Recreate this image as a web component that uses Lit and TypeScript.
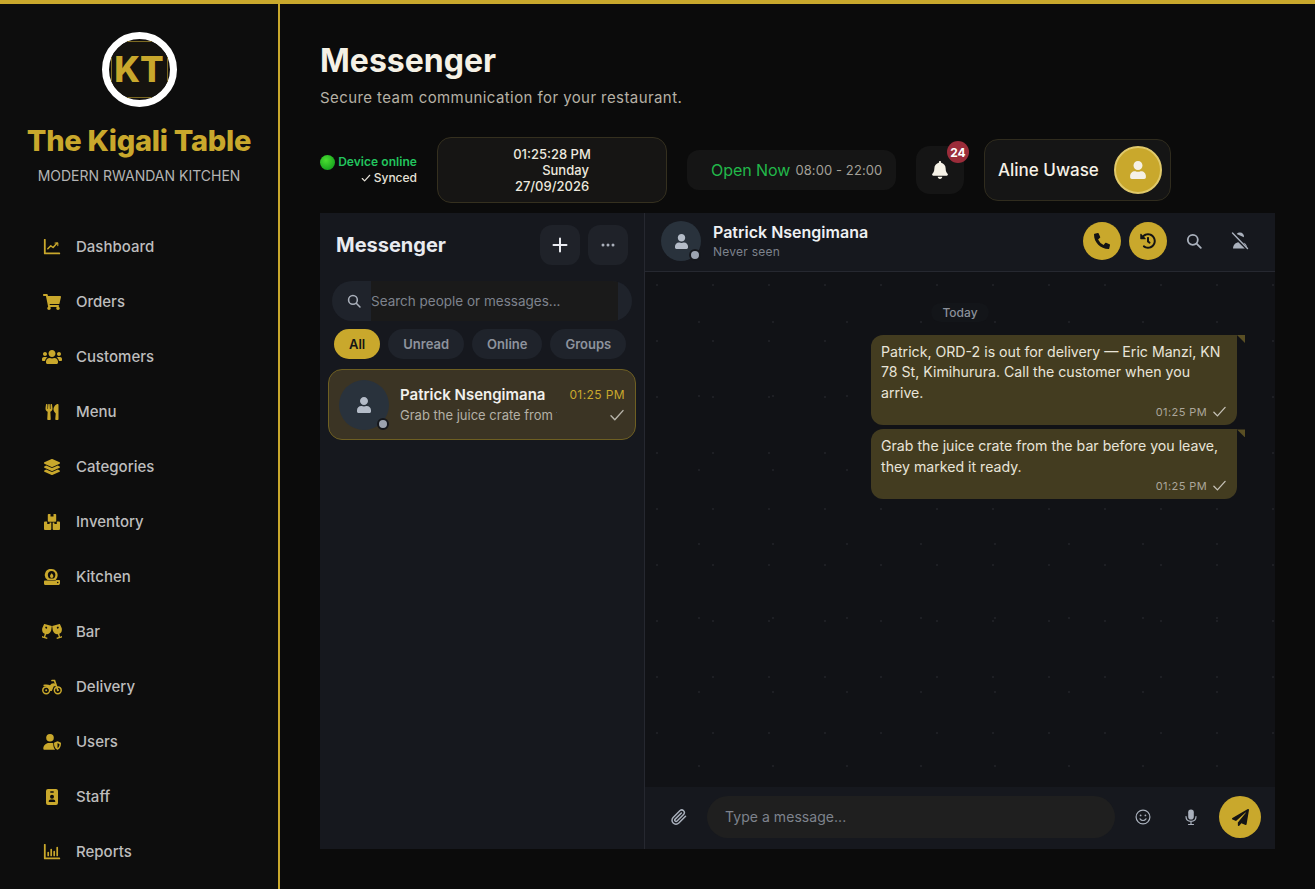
import { LitElement, html, css, svg } from "lit";
import { customElement } from "lit/decorators.js";

const ic = (vb: string, body: unknown, cls = "") =>
  html`<svg class="ic ${cls}" viewBox="${vb}" fill="currentColor" aria-hidden="true">${body}</svg>`;

const P = {
  user: "M224 256c70.7 0 128-57.3 128-128S294.7 0 224 0 96 57.3 96 128s57.3 128 128 128zm89.6 32h-16.7c-22.2 10.2-46.9 16-72.9 16s-50.6-5.8-72.9-16h-16.7C60.2 288 0 348.2 0 422.4V464c0 26.5 21.5 48 48 48h352c26.5 0 48-21.5 48-48v-41.6c0-74.2-60.2-134.4-134.4-134.4z",
  users: "M96 224c35.3 0 64-28.7 64-64s-28.7-64-64-64-64 28.7-64 64 28.7 64 64 64zm448 0c35.3 0 64-28.7 64-64s-28.7-64-64-64-64 28.7-64 64 28.7 64 64 64zm32 32h-64c-17.6 0-33.5 7.1-45.1 18.6 40.3 22.1 68.9 62 75.1 109.4h66c17.7 0 32-14.3 32-32v-32c0-35.3-28.7-64-64-64zm-256 0c61.9 0 112-50.1 112-112S381.9 32 320 32 208 82.1 208 144s50.1 112 112 112zm76.8 32h-8.3c-20.8 10-43.9 16-68.5 16s-47.6-6-68.5-16h-8.3C179.6 288 128 339.6 128 403.2V432c0 26.5 21.5 48 48 48h288c26.5 0 48-21.5 48-48v-28.8c0-63.6-51.6-115.2-115.2-115.2zm-223.7-13.4C161.5 263.1 145.6 256 128 256H64c-35.3 0-64 28.7-64 64v32c0 17.7 14.3 32 32 32h65.9c6.3-47.4 34.9-87.3 75.2-109.4z",
  bell: "M224 512c35.32 0 63.97-28.65 63.97-64H160.03c0 35.35 28.65 64 63.97 64zm215.39-149.71c-19.32-20.76-55.47-51.99-55.47-154.29 0-77.7-54.48-139.9-127.94-155.16V32c0-17.67-14.32-32-31.98-32s-31.98 14.33-31.98 32v20.84C118.56 68.1 64.08 130.3 64.08 208c0 102.3-36.15 133.53-55.47 154.29-6 6.45-8.66 14.16-8.61 21.71.11 16.4 12.98 32 32.1 32h383.8c19.12 0 32-15.6 32.1-32 .05-7.55-2.61-15.27-8.61-21.71z",
  phone: "M497.39 361.8l-112-48a24 24 0 0 0-28 6.9l-49.6 60.6A370.66 370.66 0 0 1 130.6 204.11l60.6-49.6a23.94 23.94 0 0 0 6.9-28l-48-112A24.16 24.16 0 0 0 122.6.61l-104 24A24 24 0 0 0 0 48c0 256.5 207.9 464 464 464a24 24 0 0 0 23.4-18.6l24-104a24.29 24.29 0 0 0-14.01-27.6z",
  plane: "M476 3.2L12.5 270.6c-18.1 10.4-15.8 35.6 2.2 43.2L121 358.4l287.3-253.2c5.5-4.9 13.3 2.6 8.6 8.3L176 407v80.5c0 23.6 28.5 32.9 42.5 15.8L282 426l124.6 52.2c14.2 6 30.4-2.9 33-18.2l72-432C515 7.8 493.3-6.8 476 3.2z",
  history: "M504 255.531c.253 136.64-111.18 248.372-247.82 248.468-59.015.042-113.223-20.53-155.822-54.911-11.077-8.94-11.905-25.541-1.839-35.607l11.267-11.267c8.609-8.609 22.353-9.551 31.891-1.984C173.062 425.135 212.781 440 256 440c101.705 0 184-82.311 184-184 0-101.705-82.311-184-184-184-48.814 0-93.149 18.969-126.068 49.932l50.754 50.754c10.08 10.08 2.941 27.314-11.313 27.314H24c-8.837 0-16-7.163-16-16V38.627c0-14.254 17.234-21.393 27.314-11.314l49.372 49.372C129.209 34.136 189.552 8 256 8c136.81 0 247.747 110.78 248 247.531zm-180.912 78.784l9.823-12.63c8.138-10.463 6.253-25.542-4.21-33.679L288 256.349V152c0-13.255-10.745-24-24-24h-16c-13.255 0-24 10.745-24 24v135.651l65.409 50.874c10.463 8.137 25.541 6.253 33.679-4.21z",
  utensils: "M207.9 15.2c.8 4.7 16.1 94.5 16.1 128.8 0 52.3-27.8 89.6-68.9 104.6L168 486.7c.7 13.7-10.2 25.3-24 25.3H80c-13.7 0-24.7-11.5-24-25.3l12.9-238.1C27.7 233.6 0 196.2 0 144 0 109.6 15.3 19.9 16.1 15.2 19.3-5.1 61.4-5.4 64 16.3v141.2c1.3 3.4 15.1 3.2 16 0 1.4-25.3 7.9-139.2 8-141.8 3.3-20.8 44.7-20.8 47.9 0 .2 2.7 6.6 116.5 8 141.8.9 3.2 14.8 3.4 16 0V16.3c2.6-21.6 44.8-21.4 48-1.1zm119.2 285.7l-15 185.1c-1.2 14 9.9 26 23.9 26h56c13.3 0 24-10.7 24-24V24c0-13.2-10.7-24-24-24-82.5 0-221.4 178.5-64.9 300.9z",
  layers: "M12.41 148.02l232.94 105.67c6.8 3.09 14.49 3.09 21.29 0l232.94-105.67c16.55-7.51 16.55-32.52 0-40.03L266.65 2.31a25.607 25.607 0 0 0-21.29 0L12.41 107.98c-16.55 7.51-16.55 32.53 0 40.04zm487.18 88.28l-58.09-26.33-161.64 73.27c-7.56 3.43-15.59 5.17-23.86 5.17s-16.29-1.74-23.86-5.17L70.51 209.97l-58.1 26.33c-16.55 7.5-16.55 32.5 0 40l232.94 105.59c6.8 3.08 14.49 3.08 21.29 0L499.59 276.3c16.55-7.5 16.55-32.5 0-40zm0 127.8l-57.87-26.23-161.86 73.37c-7.56 3.43-15.59 5.17-23.86 5.17s-16.29-1.74-23.86-5.17L70.29 337.87 12.41 364.1c-16.55 7.5-16.55 32.5 0 40l232.94 105.59c6.8 3.08 14.49 3.08 21.29 0L499.59 404.1c16.55-7.5 16.55-32.5 0-40z",
  cart: "M528.12 301.319l47.273-208C578.806 78.301 567.391 67 551.99 64H159.208l-9.166-44.81C147.758 8.021 137.93 0 126.529 0H24C10.745 0 0 10.745 0 24v16c0 13.255 10.745 24 24 24h69.883l70.248 343.435C147.325 417.1 136 435.222 136 456c0 30.928 25.072 56 56 56s56-25.072 56-56c0-15.674-6.447-29.835-16.824-40h209.647C430.447 426.165 424 440.326 424 456c0 30.928 25.072 56 56 56s56-25.072 56-56c0-22.172-12.888-41.332-31.579-50.405l5.517-24.276c3.413-15.018-8.002-29.319-23.403-29.319H218.117l-6.545-32h293.145c11.206 0 20.92-7.754 23.403-18.681z",
};

const p = (d: string) => svg`<path d="${d}"/>`;
const sol = (vb: string, d: string, cls = "") => ic(vb, p(d), cls);

const glass = "M-4 0h8l.6 4.500c0 2.800-1.900 4.700-3.900 4.900v2.900h2.300v1.400h-6V12.300h2.300V9.400C-2.700 9.200-4.600 7.300-4.600 4.500z";

const navIcons = {
  chart: html`<svg class="ic nav-ic" viewBox="0 0 20 16" fill="none" stroke="currentColor" stroke-width="1.800" stroke-linecap="round" stroke-linejoin="round"><path d="M2.800 .8v13.600h14.500"/><path d="M5.800 9.800l3-3 2.300 1.700 4-4.400" stroke-width="1.500"/><path d="M13 4h2.800v2.600" stroke-width="1.100"/></svg>`,
  cart: sol("0 0 576 512", P.cart, "nav-ic"),
  users: sol("0 0 640 512", P.users, "nav-ic"),
  menu: sol("0 0 416 512", P.utensils, "nav-ic"),
  layers: sol("0 0 512 512", P.layers, "nav-ic"),
  boxes: html`<svg class="ic nav-ic" viewBox="2 2 16 16" fill="currentColor"><path d="M6.600 2h1.900v2.400h3V2h1.900a.8.8 0 0 1 .8.8V9a.8.8 0 0 1-.8.8H6.600a.8.8 0 0 1-.8-.8V2.800a.8.8 0 0 1 .8-.8z"/><path d="M3 9.400h2.200v2.700h2.400V10.600h1.700V17a1 1 0 0 1-1 1H3a1 1 0 0 1-1-1v-6.600a1 1 0 0 1 1-1z"/><path d="M10.700 10.600h1.700v1.500h2.400V9.400H17a1 1 0 0 1 1 1V17a1 1 0 0 1-1 1h-5.300a1 1 0 0 1-1-1z"/></svg>`,
  kitchen: html`<svg class="ic nav-ic" viewBox="2 2 16 16" fill="currentColor"><path fill-rule="evenodd" d="M9.600 2a6 6 0 0 1 5.900 7.200c-.3 1.600-1 2.800-1.900 3.800H5.600a6 6 0 0 1 4-11zm0 2a3.800 3.800 0 0 0-3.700 4.400c.2 1.500.9 2.500 1.800 3.100h3.800c.9-.6 1.600-1.600 1.800-3.100A3.800 3.800 0 0 0 9.600 4z"/><path d="M9.700 6.300c.9 1 1.700 1.900 1.700 3a1.700 1.700 0 0 1-3.400 0c0-1.100.8-2 1.700-3z"/><path fill-rule="evenodd" d="M3 13.600h9.500c1.200 0 1.700-.7 2.500-.7h2.200c.5 0 .8.400.8.800v2.500c0 1-.8 1.800-1.800 1.800H3.200c-1 0-1.200-.8-1.200-1.700v-1.700c0-.5.500-1 1-1zm12.700 1.100a.8.800 0 1 0 0 1.600.8.800 0 0 0 0-1.600z"/></svg>`,
  bar: html`<svg class="ic nav-ic" viewBox="0 0 20 16" fill="currentColor"><g transform="translate(6 1) rotate(16)"><path d="${glass}"/><circle cx="-1" cy="3" r="1" fill="#0d0d0d"/></g><g transform="translate(14 1) rotate(-16)"><path d="${glass}"/><circle cx="1" cy="3" r="1" fill="#0d0d0d"/></g></svg>`,
  bike: html`<svg class="ic nav-ic" viewBox="0 0 20 16" fill="none" stroke="currentColor"><circle cx="4.200" cy="11.300" r="3.400" stroke-width="1.500"/><circle cx="15.800" cy="11.300" r="3.400" stroke-width="1.500"/><circle cx="4.200" cy="11.300" r="1" fill="currentColor" stroke="none"/><circle cx="15.800" cy="11.300" r="1" fill="currentColor" stroke="none"/><path d="M15.800 11.300L12.500 1.500H10" stroke-width="1.700" stroke-linecap="round"/><path fill="currentColor" stroke="none" d="M1.500 5.800c2.500-.5 4.800-.4 6.500.4l1.400-1.400c1-.8 2.900-.8 3.900-.1l.8 2-2.400 .8-1.900 4.400H7.500C7 9 5 7.200 1.500 7.300z"/></svg>`,
  shield: html`<svg class="ic nav-ic" viewBox="0 0 20 16" fill="currentColor"><circle cx="8" cy="3.800" r="3.800"/><path d="M7 9h2.200c.8 0 1.500.1 2.100.3v1.200c0 1.800.6 3.600 1.800 5.200H2.200a1 1 0 0 1-.9-1C1.300 11.500 3.800 9 7 9z"/><path fill-rule="evenodd" d="M15.500 7.300l3 1.300c.3.100.5.400.5.700 0 2.600-.8 5.400-3.300 6.500a1 1 0 0 1-.4 0c-2.500-1.100-3.300-3.900-3.300-6.500 0-.3.200-.6.500-.7zm0 1.800v5c1.300-.8 1.900-2.400 2-3.900z"/></svg>`,
  badge: html`<svg class="ic nav-ic" viewBox="0 0 20 16" fill="currentColor"><path fill-rule="evenodd" d="M6 0h8a2 2 0 0 1 2 2v12a2 2 0 0 1-2 2H6a2 2 0 0 1-2-2V2a2 2 0 0 1 2-2zm2.800 2.300a.7.700 0 0 0 0 1.400h2.400a.7.700 0 0 0 0-1.400zM10 5.700a2 2 0 1 0 0 4 2 2 0 0 0 0-4zm-1.300 4.800c-1.100 0-2 .8-2 1.900 0 .3.300.6.600.6h5.400c.3 0 .6-.3.600-.6 0-1.100-.9-1.900-2-1.900z"/></svg>`,
  reports: html`<svg class="ic nav-ic" viewBox="0 0 20 16" fill="none" stroke="currentColor" stroke-linecap="round"><path d="M2.800 .8v13.600h14.500" stroke-width="1.800" stroke-linejoin="round"/><path d="M6.200 8.500v3M9.200 5.500v6M12.200 7.500v4M15.200 3.500v8" stroke-width="1.700"/></svg>`,
};

const check = (cls = "") => html`<svg class="ic ${cls}" viewBox="0 0 16 16" fill="none" stroke="currentColor" stroke-width="1.400" stroke-linecap="round" stroke-linejoin="round"><path d="M2 8.800l3.800 3.900L14 3.600"/></svg>`;
const searchIc = html`<svg class="ic" viewBox="0 0 16 16" fill="none" stroke="currentColor" stroke-width="1.800" stroke-linecap="round"><circle cx="6.800" cy="6.800" r="5"/><path d="M10.600 10.600l4.200 4.200"/></svg>`;

const nav: [string, unknown][] = [
  ["Dashboard", navIcons.chart], ["Orders", navIcons.cart], ["Customers", navIcons.users],
  ["Menu", navIcons.menu], ["Categories", navIcons.layers], ["Inventory", navIcons.boxes],
  ["Kitchen", navIcons.kitchen], ["Bar", navIcons.bar], ["Delivery", navIcons.bike],
  ["Users", navIcons.shield], ["Staff", navIcons.badge], ["Reports", navIcons.reports],
];

@customElement("app-root")
export class AppRoot extends LitElement {
  static styles = css`
    :host { display: block; height: 889px; overflow: hidden; background: #0b0b0b; color: #f5f1e6; font-family: Inter, "Noto Sans", sans-serif; }
    * { box-sizing: border-box; }
    .ic { display: block; flex: none; }
    .app { display: flex; flex-direction: column; height: 889px; }
    .topline { height: 4px; background: #c9a82c; flex: none; }
    .body { display: flex; flex: 1; min-height: 0; }
    .side { width: 280px; flex: none; background: #0d0d0d; border-right: 2px solid #c9a82c; display: flex; flex-direction: column; align-items: center; padding-top: 28px; overflow: hidden; }
    .logo { width: 75px; height: 75px; border-radius: 50%; border: 7px solid #fff; background: #141210; overflow: hidden; display: flex; align-items: center; justify-content: center; flex: none; }
    .logo-box { width: 57px; height: 57px; flex: none; background: #15130f; border: 1.5px solid #7d6a22; display: flex; align-items: center; justify-content: center; color: #c9a82c; font-size: 35px; font-weight: 800; line-height: 1; }
    .brand { margin: 15px 0 0; font-size: 29px; line-height: 38px; font-weight: 800; color: #c9a82c; letter-spacing: -0.27px; white-space: nowrap; }
    .tag { margin-top: 6px; font-size: 14px; line-height: 20px; color: #b4b4b4; white-space: nowrap; }
    .nav { align-self: stretch; margin-top: 33px; display: flex; flex-direction: column; }
    .nav-item { height: 55px; flex: none; display: flex; align-items: center; gap: 14px; padding-left: 42px; font-size: 15px; font-weight: 500; color: #bdbdbd; }
    .nav-ic { width: 20px; height: 16px; color: #c9a82c; }
    .main { flex: 1; min-width: 0; padding: 37px 40px 40px; display: flex; flex-direction: column; }
    h1 { margin: 0; font-size: 32px; line-height: 40px; font-weight: 700; color: #f5f1e6; }
    .sub { margin-top: 7px; font-size: 15px; line-height: 20px; color: #b6b1a5; letter-spacing: 0.42px; }
    .bar { margin-top: 29px; height: 66px; flex: none; display: flex; align-items: center; gap: 20px; }
    .status { width: 97px; flex: none; display: flex; flex-direction: column; align-items: flex-end; font-size: 12px; line-height: 16px; font-weight: 600; }
    .online { display: flex; align-items: center; color: #22c55e; gap: 3px; white-space: nowrap; letter-spacing: 0.05px; }
    .led { width: 15px; height: 15px; border-radius: 50%; background: radial-gradient(circle at 40% 35%, #4ade30, #15a01e 80%); flex: none; }
    .synced { display: flex; align-items: center; gap: 3px; color: #e6e2d8; font-weight: 500; }
    .synced .ic { width: 10px; height: 10px; stroke-width: 1.800; }
    .clock { width: 230px; height: 66px; flex: none; border-radius: 14px; border: 1px solid #35301f; background: #161514; display: flex; flex-direction: column; align-items: center; justify-content: center; font-size: 13px; line-height: 16px; font-weight: 500; color: #ece8de; }
    .clock .day { padding-left: 27px; }
    .open { width: 209px; height: 40px; flex: none; border-radius: 12px; background: #151515; display: flex; align-items: center; padding-left: 24px; gap: 5px; white-space: nowrap; }
    .open b { font-size: 16px; font-weight: 400; color: #22b84a; letter-spacing: -0.05px; }
    .open span { font-size: 13px; color: #a3a098; letter-spacing: 0.1px; }
    .bell { width: 48px; height: 48px; border-radius: 14px; background: #151515; position: relative; display: flex; align-items: center; justify-content: center; color: #f5f1e6; flex: none; }
    .bell .ic { width: 16px; height: 18px; }
    .count { position: absolute; top: -5px; right: -5px; width: 22px; height: 22px; border-radius: 50%; background: #9b2c3a; color: #fff; font-size: 12px; font-weight: 700; display: flex; align-items: center; justify-content: center; }
    .me { width: 187px; height: 62px; flex: none; border-radius: 14px; border: 1px solid #302c1e; background: #151515; display: flex; align-items: center; justify-content: space-between; padding: 0 8px 0 13px; font-size: 17px; font-weight: 500; color: #f5f1e6; }
    .me-av { width: 48px; height: 48px; border-radius: 50%; background: #c9a82c; border: 2px solid #e0c96a; display: flex; align-items: center; justify-content: center; color: #f5f1e6; }
    .me-av .ic { width: 16px; height: 18px; }
    .panel { margin-top: 10px; flex: 1; min-height: 0; display: flex; background: #16181e; }
    .list { width: 325px; flex: none; border-right: 1px solid #262830; display: flex; flex-direction: column; }
    .list-head { height: 64px; flex: none; padding: 0 16px; display: flex; align-items: center; gap: 8px; margin-bottom: 4px; }
    .list-head h2 { margin: 0 auto 0 0; font-size: 20px; font-weight: 700; color: #e9ebf0; }
    .sq { width: 40px; height: 40px; border-radius: 12px; background: #1f2229; display: flex; align-items: center; justify-content: center; color: #e9ebf0; flex: none; }
    .search { margin: 0 12px; height: 40px; border-radius: 20px; background: #1f232b; display: flex; align-items: stretch; overflow: hidden; padding: 0 14px 0 15px; flex: none; }
    .search .ic { width: 14px; height: 14px; align-self: center; color: #a9afba; margin-right: 10px; }
    .search div { flex: 1; background: #1a1a1a; color: #7e838d; font-size: 13.500px; line-height: 40px; }
    .chips { display: flex; gap: 8px; padding: 8px 14px 0; flex: none; }
    .chip { height: 30px; border-radius: 15px; padding: 0 15px; background: #1f232b; color: #8e939d; font-size: 13px; font-weight: 600; display: flex; align-items: center; }
    .chip.on { background: #c9a82c; color: #141414; }
    .conv { margin: 10px 8px 0; height: 71px; border-radius: 14px; border: 1px solid #6e5f22; background: #3b3424; display: flex; align-items: center; padding: 0 10px; flex: none; }
    .av { border-radius: 50%; background: #29323c; display: flex; align-items: center; justify-content: center; color: #b4bcc8; position: relative; flex: none; }
    .av.big { width: 50px; height: 50px; }
    .av.big .ic { width: 14px; height: 16px; }
    .av.small { width: 40px; height: 40px; }
    .av.small .ic { width: 13px; height: 15px; }
    .dot { position: absolute; right: 0; bottom: 0; width: 12px; height: 12px; border-radius: 50%; background: #9ca3af; border: 2px solid #15171c; }
    .conv-mid { margin-left: 11px; width: 157px; overflow: hidden; white-space: nowrap; }
    .conv-name { font-size: 15px; line-height: 20px; font-weight: 600; color: #f1f0ec; padding-top: 1px; }
    .conv-msg { font-size: 13px; line-height: 20px; color: #b4b1a6; }
    .conv-end { margin-left: auto; display: flex; flex-direction: column; align-items: flex-end; gap: 4px; }
    .conv-time { font-size: 12px; line-height: 16px; color: #c9a82c; letter-spacing: 0.4px; }
    .conv-end .ic { width: 16px; height: 16px; color: #b9b6ab; }
    .chat { flex: 1; min-width: 0; display: flex; flex-direction: column; }
    .chat-head { height: 59px; flex: none; border-bottom: 1px solid #262830; display: flex; align-items: center; padding: 0 16px 2px; }
    .chat-id { margin-left: 12px; }
    .chat-name { font-size: 16px; line-height: 20px; font-weight: 600; color: #eef0f3; }
    .chat-seen { font-size: 12px; line-height: 16px; color: #7d828c; letter-spacing: 0.25px; margin-top: 2px; }
    .act { margin-left: auto; display: flex; align-items: center; gap: 8px; }
    .gold { width: 38px; height: 38px; border-radius: 50%; background: #c9a82c; color: #141414; display: flex; align-items: center; justify-content: center; }
    .gold .ic { width: 16px; height: 16px; }
    .plain { width: 38px; height: 38px; display: flex; align-items: center; justify-content: center; color: #aab1bd; }
    .plain .ic { width: 16px; height: 16px; }
    .plain .wide { width: 18px; height: 18px; }
    .feed { flex: 1; min-height: 0; background-color: #111216; background-image: radial-gradient(circle, #1e1f24 1px, transparent 1.600px), radial-gradient(circle, #1e1f24 1px, transparent 1.600px); background-size: 56px 56px, 74px 74px; background-position: -16px -15px, 17px 13px; padding-top: 31px; display: flex; flex-direction: column; align-items: flex-end; }
    .today { align-self: center; height: 19px; margin-bottom: 13px; padding: 0 11px; border-radius: 10px; background: #131519; color: #8b909a; font-size: 12px; font-weight: 500; display: flex; align-items: center; }
    .msg { width: 366px; margin-right: 38px; background: #433c20; border-radius: 12px 0 12px 12px; padding: 7px 10px 5.500px; position: relative; font-size: 14.150px; line-height: 20.300px; color: #e8e4d8; margin-bottom: 4px; }
    .msg::after { content: ""; position: absolute; top: 0; right: -8px; width: 8px; height: 8px; background: #5a4f24; clip-path: polygon(0 0, 100% 0, 100% 100%); }
    .meta { display: flex; justify-content: flex-end; align-items: center; gap: 5px; font-size: 11px; line-height: 16px; color: #aba69a; letter-spacing: 0.4px; margin-top: 1px; }
    .meta .ic { width: 15px; height: 15px; color: #c5c1b6; }
    .foot { height: 62px; flex: none; display: flex; align-items: center; padding: 0 14px 2px 22px; background: #16181e; }
    .foot .plain { width: 24px; }
    .foot .clip { margin-right: 16px; }
    .input { width: 408px; height: 42px; border-radius: 21px; background: #1f1f1f; color: #7e838d; font-size: 14px; display: flex; align-items: center; padding: 0 0 1px 18px; margin-right: 16px; letter-spacing: 0.05px; }
    .foot .mic { margin-left: 24px; margin-right: 16px; }
    .send { width: 42px; height: 42px; border-radius: 50%; background: #c9a82c; color: #141414; display: flex; align-items: center; justify-content: center; }
    .send .ic { width: 17px; height: 17px; }
  `;

  render() {
    return html`
      <div class="app">
        <div class="topline"></div>
        <div class="body">
          <aside class="side">
            <div class="logo"><div class="logo-box">KT</div></div>
            <div class="brand">The Kigali Table</div>
            <div class="tag">MODERN RWANDAN KITCHEN</div>
            <nav class="nav">
              ${nav.map(([t, i]) => html`<div class="nav-item">${i}<span>${t}</span></div>`)}
            </nav>
          </aside>
          <main class="main">
            <h1>Messenger</h1>
            <div class="sub">Secure team communication for your restaurant.</div>
            <div class="bar">
              <div class="status">
                <div class="online"><span class="led"></span>Device online</div>
                <div class="synced">${check()}Synced</div>
              </div>
              <div class="clock"><div>01:25:28 PM</div><div class="day">Sunday</div><div>27/09/2026</div></div>
              <div class="open"><b>Open Now</b><span>08:00 - 22:00</span></div>
              <div class="bell">${sol("0 0 448 512", P.bell)}<div class="count">24</div></div>
              <div class="me"><span>Aline Uwase</span><div class="me-av">${sol("0 0 448 512", P.user)}</div></div>
            </div>
            <section class="panel">
              <div class="list">
                <div class="list-head">
                  <h2>Messenger</h2>
                  <div class="sq"><svg class="ic" width="16" height="16" viewBox="0 0 16 16" fill="none" stroke="currentColor" stroke-width="2" stroke-linecap="round"><path d="M8 1.500v13M1.500 8h13"/></svg></div>
                  <div class="sq"><svg class="ic" width="14" height="4" viewBox="0 0 14 4" fill="#a9afba"><circle cx="2" cy="2" r="1.500"/><circle cx="7" cy="2" r="1.500"/><circle cx="12" cy="2" r="1.500"/></svg></div>
                </div>
                <div class="search">${searchIc}<div>Search people or messages...</div></div>
                <div class="chips">
                  <div class="chip on">All</div><div class="chip">Unread</div><div class="chip">Online</div><div class="chip">Groups</div>
                </div>
                <div class="conv">
                  <div class="av big">${sol("0 0 448 512", P.user)}<span class="dot"></span></div>
                  <div class="conv-mid">
                    <div class="conv-name">Patrick Nsengimana</div>
                    <div class="conv-msg">Grab the juice crate from the bar before you leave</div>
                  </div>
                  <div class="conv-end"><div class="conv-time">01:25 PM</div>${check()}</div>
                </div>
              </div>
              <div class="chat">
                <div class="chat-head">
                  <div class="av small">${sol("0 0 448 512", P.user)}<span class="dot"></span></div>
                  <div class="chat-id"><div class="chat-name">Patrick Nsengimana</div><div class="chat-seen">Never seen</div></div>
                  <div class="act">
                    <div class="gold">${sol("0 0 512 512", P.phone)}</div>
                    <div class="gold">${sol("0 0 512 512", P.history)}</div>
                    <div class="plain">${searchIc}</div>
                    <div class="plain"><svg class="ic wide" viewBox="0 0 18 18"><path fill="currentColor" d="M9 .5a4 4 0 0 1 3.900 4.800L5.700 1.900A4 4 0 0 1 9 .5z"/><path fill="currentColor" d="M2 16.500c0-3.200 2.300-5.800 5.400-6.200l6.400 6.200z"/><path fill="currentColor" d="M12.500 10.500c2 .8 3.500 3 3.500 5z"/><path stroke="currentColor" stroke-width="1.400" stroke-linecap="round" d="M1.500 1l15 15.500"/></svg></div>
                  </div>
                </div>
                <div class="feed">
                  <div class="today">Today</div>
                  <div class="msg">Patrick, ORD-2 is out for delivery — Eric Manzi, KN 78 St, Kimihurura. Call the customer when you arrive.<div class="meta">01:25 PM${check()}</div></div>
                  <div class="msg">Grab the juice crate from the bar before you leave, they marked it ready.<div class="meta">01:25 PM${check()}</div></div>
                </div>
                <div class="foot">
                  <div class="plain clip"><svg class="ic" viewBox="2 1.500 15 15" fill="none" stroke="currentColor" stroke-width="1.400" stroke-linecap="round" stroke-linejoin="round"><path d="M15.600 8.300l-6.300 6.300a3.700 3.700 0 0 1-5.300-5.200l6.500-6.500a2.500 2.500 0 0 1 3.500 3.500l-6.300 6.400a1.200 1.200 0 0 1-1.800-1.800l5.800-5.700"/></svg></div>
                  <div class="input">Type a message...</div>
                  <div class="plain"><svg class="ic" viewBox="0 0 16 16" fill="none" stroke="currentColor" stroke-width="1.200" stroke-linecap="round"><circle cx="8" cy="8" r="6.900"/><circle cx="5.600" cy="6.400" r=".9" fill="currentColor" stroke="none"/><circle cx="10.400" cy="6.400" r=".9" fill="currentColor" stroke="none"/><path d="M5 9.800c.8 1.200 1.800 1.700 3 1.700s2.200-.5 3-1.700"/></svg></div>
                  <div class="plain mic"><svg class="ic" viewBox="0 0 16 16" fill="none" stroke="currentColor" stroke-width="1.200" stroke-linecap="round"><rect x="5.200" y=".5" width="5.600" height="10" rx="2.800" fill="currentColor" stroke="none"/><path d="M3 7.500c0 3 2.200 4.800 5 4.800s5-1.800 5-4.800M8 12.300V15.500M5.500 15.500h5"/></svg></div>
                  <div class="send">${sol("0 0 512 512", P.plane)}</div>
                </div>
              </div>
            </section>
          </main>
        </div>
      </div>
    `;
  }
}
